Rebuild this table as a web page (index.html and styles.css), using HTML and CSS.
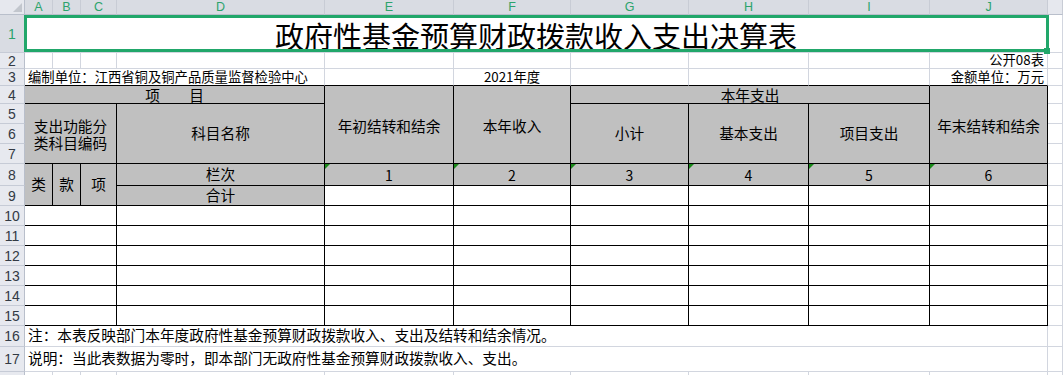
FILE: index.html
```html
<!DOCTYPE html>
<html lang="zh-CN">
<head>
<meta charset="utf-8">
<title>政府性基金预算财政拨款收入支出决算表</title>
<link rel="stylesheet" href="styles.css">
</head>
<body>
<div class="sheet">
  <!-- column headers -->
  <div class="cell corner"></div>
  <div class="cell ch">A</div>
  <div class="cell ch">B</div>
  <div class="cell ch">C</div>
  <div class="cell ch">D</div>
  <div class="cell ch">E</div>
  <div class="cell ch">F</div>
  <div class="cell ch">G</div>
  <div class="cell ch">H</div>
  <div class="cell ch">I</div>
  <div class="cell ch">J</div>
  <div class="cell ch off"></div>

  <!-- row 1 -->
  <div class="cell rh sel">1</div>
  <div class="cell s10 title">政府性基金预算财政拨款收入支出决算表</div>
  <div class="cell"></div>

  <!-- row 2 -->
  <div class="cell rh">2</div>
  <div class="cell"></div>
  <div class="cell"></div>
  <div class="cell"></div>
  <div class="cell"></div>
  <div class="cell"></div>
  <div class="cell"></div>
  <div class="cell"></div>
  <div class="cell"></div>
  <div class="cell"></div>
  <div class="cell small right">公开08表</div>
  <div class="cell"></div>

  <!-- row 3 -->
  <div class="cell rh">3</div>
  <div class="cell s4 tb small left">编制单位：江西省铜及铜产品质量监督检验中心</div>
  <div class="cell tb"></div>
  <div class="cell tb small">2021年度</div>
  <div class="cell tb"></div>
  <div class="cell tb"></div>
  <div class="cell tb"></div>
  <div class="cell tb small right">金额单位：万元</div>
  <div class="cell"></div>

  <!-- row 4 -->
  <div class="cell rh">4</div>
  <div class="cell s4 t g head">项　　目</div>
  <div class="cell r4 t g up">年初结转和结余</div>
  <div class="cell r4 t g up">本年收入</div>
  <div class="cell s3 t g head">本年支出</div>
  <div class="cell r4 t g up">年末结转和结余</div>
  <div class="cell"></div>

  <!-- row 5 -->
  <div class="cell rh">5</div>
  <div class="cell s3 r3 t g wrap">支出功能分类科目编码</div>
  <div class="cell r3 t g">科目名称</div>
  <div class="cell r3 t g">小计</div>
  <div class="cell r3 t g">基本支出</div>
  <div class="cell r3 t g">项目支出</div>
  <div class="cell"></div>

  <!-- row 6 -->
  <div class="cell rh">6</div>
  <div class="cell"></div>

  <!-- row 7 -->
  <div class="cell rh">7</div>
  <div class="cell"></div>

  <!-- row 8 -->
  <div class="cell rh">8</div>
  <div class="cell r2 t g">类</div>
  <div class="cell r2 t g">款</div>
  <div class="cell r2 t g">项</div>
  <div class="cell t g">栏次</div>
  <div class="cell t g num flag">1</div>
  <div class="cell t g num flag">2</div>
  <div class="cell t g num flag">3</div>
  <div class="cell t g num flag">4</div>
  <div class="cell t g num flag">5</div>
  <div class="cell t g num flag">6</div>
  <div class="cell"></div>

  <!-- row 9 -->
  <div class="cell rh">9</div>
  <div class="cell t g">合计</div>
  <div class="cell t"></div>
  <div class="cell t"></div>
  <div class="cell t"></div>
  <div class="cell t"></div>
  <div class="cell t"></div>
  <div class="cell t"></div>
  <div class="cell"></div>

  <!-- rows 10-15 -->
  <div class="cell rh">10</div>
  <div class="cell s3 t"></div><div class="cell t"></div><div class="cell t"></div><div class="cell t"></div><div class="cell t"></div><div class="cell t"></div><div class="cell t"></div><div class="cell t"></div>
  <div class="cell"></div>

  <div class="cell rh">11</div>
  <div class="cell s3 t"></div><div class="cell t"></div><div class="cell t"></div><div class="cell t"></div><div class="cell t"></div><div class="cell t"></div><div class="cell t"></div><div class="cell t"></div>
  <div class="cell"></div>

  <div class="cell rh">12</div>
  <div class="cell s3 t"></div><div class="cell t"></div><div class="cell t"></div><div class="cell t"></div><div class="cell t"></div><div class="cell t"></div><div class="cell t"></div><div class="cell t"></div>
  <div class="cell"></div>

  <div class="cell rh">13</div>
  <div class="cell s3 t"></div><div class="cell t"></div><div class="cell t"></div><div class="cell t"></div><div class="cell t"></div><div class="cell t"></div><div class="cell t"></div><div class="cell t"></div>
  <div class="cell"></div>

  <div class="cell rh">14</div>
  <div class="cell s3 t"></div><div class="cell t"></div><div class="cell t"></div><div class="cell t"></div><div class="cell t"></div><div class="cell t"></div><div class="cell t"></div><div class="cell t"></div>
  <div class="cell"></div>

  <div class="cell rh">15</div>
  <div class="cell s3 t"></div><div class="cell t"></div><div class="cell t"></div><div class="cell t"></div><div class="cell t"></div><div class="cell t"></div><div class="cell t"></div><div class="cell t"></div>
  <div class="cell"></div>

  <!-- row 16 -->
  <div class="cell rh">16</div>
  <div class="cell s10 left note">注：本表反映部门本年度政府性基金预算财政拨款收入、支出及结转和结余情况。</div>
  <div class="cell"></div>

  <!-- row 17 -->
  <div class="cell rh">17</div>
  <div class="cell s10 left note low">说明：当此表数据为零时，即本部门无政府性基金预算财政拨款收入、支出。</div>
  <div class="cell"></div>

  <!-- row 18 (only a sliver visible) -->
  <div class="cell rh"></div>
  <div class="cell"></div>
  <div class="cell"></div>
  <div class="cell"></div>
  <div class="cell"></div>
  <div class="cell"></div>
  <div class="cell"></div>
  <div class="cell"></div>
  <div class="cell"></div>
  <div class="cell"></div>
  <div class="cell"></div>
  <div class="cell"></div>
</div>
</body>
</html>
```

FILE: styles.css
```css
* {
  box-sizing: border-box;
  margin: 0;
  padding: 0;
}

body {
  margin: 0;
  background: #ffffff;
  color: #000000;
  font-family: "Noto Sans CJK SC", "Noto Sans", sans-serif;
  overflow: hidden;
}

.sheet {
  display: grid;
  width: 1063px;
  height: 375px;
  overflow: hidden;
  grid-template-columns: 25px 28px 28px 36px 208px 129px 117px 118px 120px 121px 118px 1fr;
  grid-template-rows: 15px 38px 16px 17px 18px 20px 20px 20px 22px 20px repeat(6, 20px) 21px 25px 20px;
}

.cell {
  position: relative;
  display: flex;
  align-items: center;
  justify-content: center;
  border-right: 1px solid #d2d6df;
  border-bottom: 1px solid #d2d6df;
  font-size: 14.67px;
  line-height: 1;
  white-space: nowrap;
  min-width: 0;
}

/* spans */
.s3 { grid-column: span 3; }
.s4 { grid-column: span 4; }
.s10 { grid-column: span 10; }
.r2 { grid-row: span 2; }
.r3 { grid-row: span 3; }
.r4 { grid-row: span 4; }

/* headers */
.corner {
  background: #e6e8ee;
  border-right-color: #b9bfcb;
  border-bottom-color: #b9bfcb;
}

.corner::after {
  content: "";
  position: absolute;
  right: 2px;
  bottom: 2px;
  border-left: 9px solid transparent;
  border-bottom: 9px solid #c2c6cd;
}

.ch {
  background: #d9dce3;
  color: #2ca36c;
  font-family: "Liberation Sans", Arial, sans-serif;
  font-size: 12.5px;
  border-right-color: #c8ccd5;
  border-bottom-color: #b9bfcb;
}

.ch.off {
  background: #e6e8ee;
}

.rh {
  background: #e7e9ef;
  color: #333a44;
  font-family: "Liberation Sans", Arial, sans-serif;
  font-size: 14px;
  border-right-color: #b9bfcb;
  border-bottom-color: #c6cbd6;
}

.rh.sel {
  background: #d9dce3;
  color: #2ca36c;
}

/* title with selection */
.title {
  font-size: 29px;
  padding-top: 3px;
}

.title::after {
  content: "";
  position: absolute;
  top: 0;
  left: -1px;
  right: -2px;
  bottom: 0;
  border: 3px solid #21a76a;
  pointer-events: none;
}

.title::before {
  content: "";
  position: absolute;
  right: -3px;
  bottom: -2px;
  width: 6px;
  height: 6px;
  background: #21a76a;
  z-index: 2;
}

/* text variants */
.small {
  font-size: 13.33px;
  align-items: flex-end;
  padding-bottom: 2px;
}

.left {
  justify-content: flex-start;
  padding-left: 3px;
}

.right {
  justify-content: flex-end;
  padding-right: 3px;
}

.note {
  align-items: flex-end;
  padding-bottom: 3px;
}

.note.low {
  padding-bottom: 5px;
}

/* table */
.t {
  border-right-color: #000000;
  border-bottom-color: #000000;
}

.tb {
  border-bottom-color: #000000;
}

.g {
  background: #c0c0c0;
}

.head {
  padding-top: 2px;
}

.up {
  align-items: flex-start;
  padding-top: 33px;
}

.wrap {
  white-space: normal;
  text-align: center;
  line-height: 17px;
  padding: 0 8px;
}

.num {
  font-size: 14px;
}

.flag::before {
  content: "";
  position: absolute;
  left: 0;
  top: 0;
  border-top: 5px solid #1a8a1a;
  border-right: 5px solid transparent;
}
```
